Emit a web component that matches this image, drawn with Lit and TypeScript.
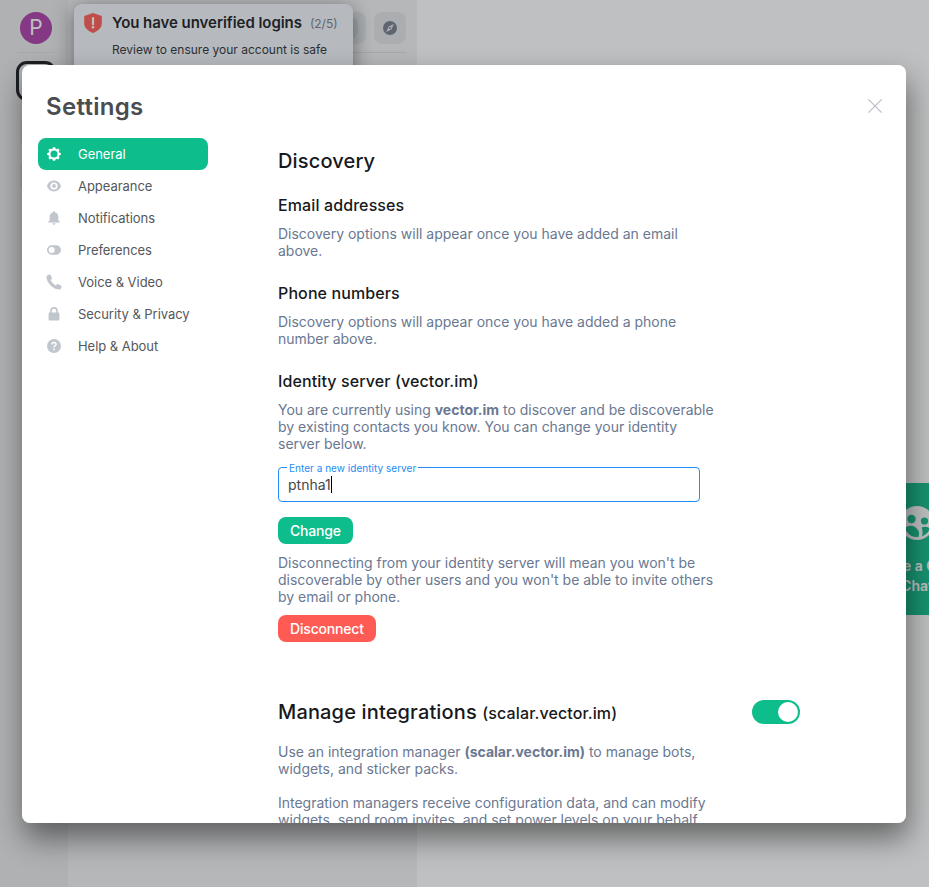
import { LitElement, html, css, svg } from "lit";
import { customElement, property } from "lit/decorators.js";

const glyphs: Record<string, unknown> = {
  gear: svg`<path fill-rule="evenodd" d="M5.9.2h2.2l.5 1.6 1 .4 1.5-.8 1.5 1.5-.8 1.5.4 1 1.6.5v2.2l-1.6.5-.4 1 .8 1.5-1.5 1.5-1.5-.8-1 .4-.5 1.6H5.9l-.5-1.6-1-.4-1.5.8-1.5-1.5.8-1.5-.4-1L.2 8.100V5.900l1.600-.5.4-1-.8-1.500 1.500-1.500 1.500.8 1-.4zM7 3.500a3.500 3.500 0 1 0 0 7 3.500 3.500 0 0 0 0-7z"/>`,
  eye: svg`<path fill-rule="evenodd" d="M7 1.600C3.700 1.600 1 3.800 0 7c1 3.200 3.700 5.400 7 5.400s6-2.200 7-5.400c-1-3.200-3.700-5.400-7-5.400zm0 1.800a3.600 3.600 0 1 1 0 7.200 3.600 3.600 0 0 1 0-7.200z"/><circle cx="7" cy="7" r="1.900"/>`,
  bell: svg`<path d="M7 .3c.7 0 1.200.5 1.200 1.200 2 .5 3.100 2.100 3.100 4.300v3.400l1.700 1.700v.6H1v-.6l1.700-1.700V5.800c0-2.200 1.100-3.800 3.100-4.300C5.800.8 6.300.3 7 .3zM5.500 12.200h3c0 .9-.6 1.500-1.500 1.500s-1.500-.6-1.500-1.500z"/>`,
  toggle: svg`<path fill-rule="evenodd" d="M4.700 2.300h4.600a4.700 4.700 0 0 1 0 9.400H4.700a4.700 4.700 0 0 1 0-9.400zm0 1.700a3 3 0 1 0 0 6 3 3 0 0 0 0-6z"/>`,
  phone: svg`<path d="M.2.500 2.300-.6c.5-.2.9 0 1.100.4l1.500 3c.2.400.1.800-.2 1.100L3.600 5.100c.9 2.200 2.900 4.300 5.200 5.300l1.300-1.100c.3-.3.7-.3 1.100-.1l3 1.500c.4.200.6.700.4 1.100l-1 2.100c-.2.400-.7.700-1.200.7C6 14.300-.2 8-.6 1.700c0-.5.3-1 .8-1.200z"/>`,
  lock: svg`<path fill-rule="evenodd" d="M3.200 5.600V3.900a3.800 3.800 0 0 1 7.600 0v1.700h.5c.6 0 1.100.5 1.100 1.100v5.700c0 .6-.5 1.100-1.100 1.100H2.700c-.6 0-1.100-.5-1.100-1.100V6.700c0-.6.5-1.100 1.100-1.100zm1.600 0h4.400V3.900a2.200 2.200 0 0 0-4.400 0z"/>`,
  help: svg`<circle cx="7" cy="7" r="7"/><path d="M4.900 5.500c0-1.300 1-2 2.100-2 1.200 0 2.100.8 2.100 1.800C9.100 6.800 7 6.800 7 8.400" fill="none" stroke="#fff" stroke-width="1.400"/><circle cx="7" cy="10.400" r=".9" fill="#fff"/>`,
};

@customElement("app-glyph")
export class AppGlyph extends LitElement {
  @property() name = "gear";
  static styles = css`
    :host { display: block; width: 14px; height: 14px; }
    svg { display: block; overflow: visible; fill: currentColor; }
  `;
  render() {
    return html`<svg width="14" height="14" viewBox="0 0 14 14">${glyphs[this.name]}</svg>`;
  }
}

@customElement("app-backdrop")
export class AppBackdrop extends LitElement {
  static styles = css`
    :host { display: flex; width: 100%; height: 100%; overflow: hidden; background: #fff; }
    .spaces { flex: none; width: 68px; box-sizing: border-box; background: #e8e9ea; display: flex; flex-direction: column; align-items: center; padding-top: 12px; }
    .avatar { width: 32px; height: 32px; margin-left: 4px; border-radius: 50%; background: #ac3ba8; color: #fff; font-size: 21px; line-height: 32px; text-align: center; }
    .rule { width: 36px; height: 1px; margin: 8px 0 8px 4px; background: #d9e0ea; }
    .home { width: 40px; height: 40px; margin-left: 4px; box-sizing: border-box; border: 3px solid #17191c; border-radius: 11px; }
    .tile { width: 32px; height: 32px; margin-left: 4px; border-radius: 8px; background: #dcddde; margin-top: 14px; }
    .rooms { flex: none; width: 349px; box-sizing: border-box; background: #f2f3f4; padding: 12px 11px 0 16px; }
    .tools { display: flex; gap: 8px; padding-bottom: 8px; border-bottom: 1px solid #d9e0ea; }
    .search { flex: 1; height: 32px; border-radius: 8px; background: #e3e6e8; display: flex; align-items: center; justify-content: flex-end; }
    .chip { width: 24px; height: 20px; border-radius: 6px; background: #d4d8dc; margin-right: 8px; }
    .explore { width: 32px; height: 32px; border-radius: 8px; background: #e3e6e8; display: grid; place-items: center; }
    .main { flex: 1; min-width: 0; padding: 483px 0 0 420px; }
    .card { width: 160px; height: 132px; box-sizing: border-box; padding-top: 23px; background: #0dbd8b; color: #fff; text-align: center; font-size: 14px; font-weight: 600; line-height: 20px; }
    .card svg { display: block; margin: 0 auto 16px; }
    .toast { position: absolute; left: 74px; top: 4px; width: 279px; height: 110px; box-sizing: border-box; padding: 9px 10px; display: flex; gap: 10px; border-radius: 8px; background: #f3f6fb; box-shadow: 0 4px 20px rgba(0, 0, 0, 0.5); color: #17191c; }
    .title { display: flex; align-items: baseline; gap: 8px; font-size: 15px; font-weight: 600; line-height: 20px; letter-spacing: -0.05px; white-space: nowrap; }
    .count { font-size: 12px; font-weight: 400; color: #737d8c; letter-spacing: 0; }
    .note { font-size: 12px; line-height: 20px; margin-top: 6px; white-space: nowrap; color: #2e3033; }
    .veil { position: absolute; inset: 0; background: rgba(46, 48, 51, 0.304); }
  `;
  render() {
    return html`
      <div class="spaces">
        <div class="avatar">P</div>
        <div class="rule"></div>
        <div class="home"></div>
        <div class="tile"></div>
        <div class="tile"></div>
      </div>
      <div class="rooms">
        <div class="tools">
          <div class="search"><div class="chip"></div></div>
          <div class="explore">
            <svg width="14" height="14" viewBox="0 0 14 14"><path fill="#737d8c" fill-rule="evenodd" d="M7 0a7 7 0 1 1 0 14A7 7 0 0 1 7 0zm3.900 3.100L5.700 5.400 3.100 10.900l5.300-2.400z"/><circle cx="7" cy="7" r="1" fill="#737d8c"/></svg>
          </div>
        </div>
      </div>
      <div class="main">
        <div class="card">
          <svg width="34" height="34" viewBox="0 0 34 34">
            <circle cx="17" cy="17" r="17" fill="#fff"/>
            <g fill="#0dbd8b"><circle cx="11.500" cy="13" r="4.200"/><circle cx="24.500" cy="15" r="3.600"/>
            <path d="M5 22c4-3.500 10-3 13 2 1.500 2 1 5 .5 7C12 31.500 7 28 5 22zM21.500 21.500c3-1.500 6-1 8.500 1-1.500 4-4.500 6.500-8 7.700.8-3.200.8-6-.5-8.700z"/></g>
          </svg>
          Create a Group<br />Chat
        </div>
      </div>
      <div class="toast">
        <svg width="18" height="20" viewBox="0 0 18 20"><path fill="#ff5b55" d="M9 0 17.800 3v7.500c0 4.300-3.600 7.500-8.800 9.500C3.800 18 .2 14.800.2 10.500V3z"/><path d="M9 5v6.300" stroke="#fff" stroke-width="2.200" stroke-linecap="round"/><circle cx="9" cy="14.300" r="1.300" fill="#fff"/></svg>
        <div>
          <div class="title">You have unverified logins <span class="count">(2/5)</span></div>
          <div class="note">Review to ensure your account is safe</div>
        </div>
      </div>
      <div class="veil"></div>
    `;
  }
}

@customElement("app-root")
export class AppRoot extends LitElement {
  static styles = css`
    :host { display: block; position: relative; width: 929px; height: 887px; overflow: hidden; font-family: Inter, sans-serif; }
    .behind { position: absolute; inset: 0; }
    .dialog { position: absolute; left: 22px; top: 65px; width: 884px; height: 758px; box-sizing: border-box; overflow: hidden; border-radius: 8px; background: #fff; color: #17191c; display: flex; flex-direction: column; }
    .shade { position: absolute; left: 22px; top: 65px; width: 884px; height: 758px; border-radius: 8px; box-shadow: 2px 15px 30px 0 rgba(0, 0, 0, 0.48); }
    header { display: flex; align-items: center; justify-content: space-between; height: 34px; padding: 25px 24px 14px; }
    header svg { margin-bottom: 2px; }
    h1 { margin: 0; font-size: 24px; line-height: 34px; font-weight: 600; letter-spacing: 0.3px; color: #4a4c50; }
    .body { display: flex; flex: 1; min-height: 0; }
    nav { width: 170px; margin-left: 16px; flex: none; }
    .tab { display: flex; align-items: center; gap: 17px; height: 32px; padding: 0 9px; border-radius: 8px; font-size: 13px; letter-spacing: -0.04px; color: #55575a; white-space: nowrap; }
    .tab app-glyph { color: #c1c6cd; }
    .tab.on { background: #0dbd8b; color: #fff; }
    .tab.on app-glyph { color: #fff; }
    .page { width: 522px; margin-left: 70px; padding-top: 10px; }
    h2 { margin: 0; font-size: 20px; line-height: 26px; font-weight: 500; letter-spacing: 0.15px; }
    h3 { margin: 0; font-size: 16px; line-height: 20px; font-weight: 500; letter-spacing: 0.11px; }
    p { margin: 0; width: 440px; font-size: 14px; line-height: 17px; letter-spacing: -0.01px; color: #6a7891; }
    b { font-weight: 700; }
    .s1 { margin-top: 21px; }
    .s2 { margin-top: 24px; }
    h3 + p { margin-top: 10px; }
    .field { position: relative; width: 422px; height: 35px; box-sizing: border-box; margin: 15px 0 15px; border: 1px solid #238cf5; border-radius: 4px; padding: 0 9px; display: flex; align-items: center; font-size: 14px; color: #45474a; }
    .label { position: absolute; left: 8px; top: -6px; padding: 0 2px; background: #fff; font-size: 10px; line-height: 12px; letter-spacing: 0.03px; color: #238cf5; white-space: nowrap; }
    .caret { width: 1px; height: 17px; background: #000; }
    .btn { display: block; width: fit-content; border: 0; height: 27px; padding: 0 12px; border-radius: 8px; font: 500 14px/27px Inter, sans-serif; letter-spacing: -0.18px; color: #fff; background: #0dbd8b; }
    .btn.danger { background: #ff5b55; margin-top: 10px; }
    .btn + p { margin-top: 10px; }
    .manage { display: flex; align-items: center; justify-content: space-between; margin: 57px 0 18px; height: 26px; }
    .manage small { font-size: 16px; letter-spacing: 0.11px; }
    .switch { width: 48px; height: 24px; box-sizing: border-box; padding: 2px; border-radius: 12px; background: #0dbd8b; display: flex; justify-content: flex-end; }
    .manage .switch { margin-bottom: 1px; }
    .knob { width: 20px; height: 20px; border-radius: 50%; background: #fff; }
  `;

  private tabs = [
    ["gear", "General"],
    ["eye", "Appearance"],
    ["bell", "Notifications"],
    ["toggle", "Preferences"],
    ["phone", "Voice & Video"],
    ["lock", "Security & Privacy"],
    ["help", "Help & About"],
  ];

  render() {
    return html`
      <app-backdrop class="behind"></app-backdrop>
      <div class="shade"></div>
      <div class="dialog">
        <header>
          <h1>Settings</h1>
          <svg width="14" height="14" viewBox="0 0 14 14"><path d="M.4.400l13.200 13.200M13.600.400L.4 13.600" stroke="#b9bec6" stroke-width="1.200"/></svg>
        </header>
        <div class="body">
          <nav>
            ${this.tabs.map(([icon, text], i) => html`<div class="tab ${i === 0 ? "on" : ""}"><app-glyph name=${icon}></app-glyph><span>${text}</span></div>`)}
          </nav>
          <div class="page">
            <h2>Discovery</h2>
            <h3 class="s1">Email addresses</h3>
            <p>Discovery options will appear once you have added an email above.</p>
            <h3 class="s2">Phone numbers</h3>
            <p>Discovery options will appear once you have added a phone number above.</p>
            <h3 class="s2">Identity server (vector.im)</h3>
            <p>You are currently using <b>vector.im</b> to discover and be discoverable by existing contacts you know. You can change your identity server below.</p>
            <div class="field"><span class="label">Enter a new identity server</span>ptnha1<span class="caret"></span></div>
            <button class="btn">Change</button>
            <p>Disconnecting from your identity server will mean you won't be discoverable by other users and you won't be able to invite others by email or phone.</p>
            <button class="btn danger">Disconnect</button>
            <div class="manage">
              <h2>Manage integrations <small>(scalar.vector.im)</small></h2>
              <div class="switch"><div class="knob"></div></div>
            </div>
            <p>Use an integration manager <b>(scalar.vector.im)</b> to manage bots, widgets, and sticker packs.<br /><br />Integration managers receive configuration data, and can modify widgets, send room invites, and set power levels on your behalf.</p>
          </div>
        </div>
      </div>
    `;
  }
}
